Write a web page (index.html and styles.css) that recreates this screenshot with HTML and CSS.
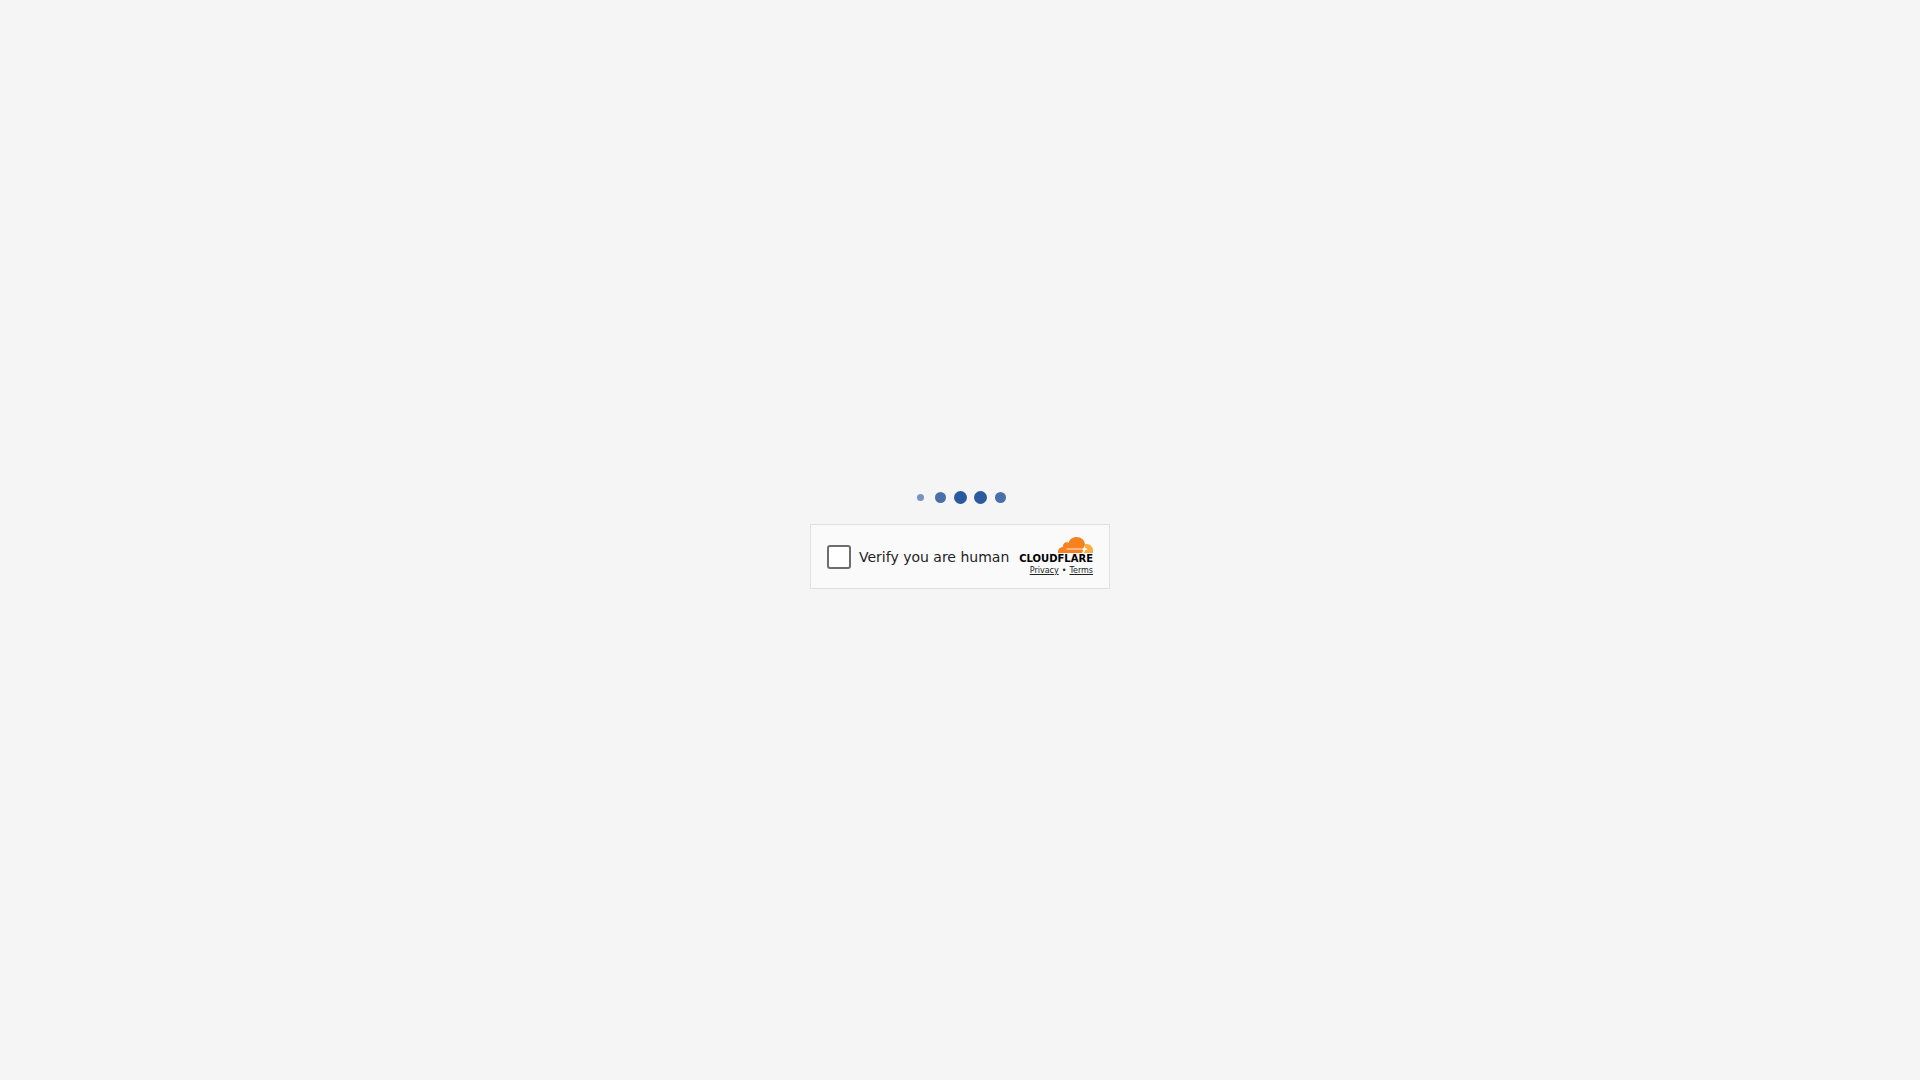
FILE: index.html
```
<!DOCTYPE html>
<html lang="en">
<head>
    <meta charset="UTF-8">
    <meta name="viewport" content="width=device-width, initial-scale=1.0">
    <title>Just a moment...</title>
    <link rel="stylesheet" href="styles.css">
</head>
<body>

    <div class="loader" role="status" aria-label="Loading">
        <span class="dot dot-small"></span>
        <span class="dot dot-medium"></span>
        <span class="dot"></span>
        <span class="dot"></span>
        <span class="dot dot-medium"></span>
    </div>

    <main class="widget">
        <div class="verify">
            <input type="checkbox" id="verifyHuman">
            <label for="verifyHuman">Verify you are human</label>
        </div>

        <div class="branding">
            <svg class="logo" viewBox="0 0 74 28" role="img" aria-label="Cloudflare">
                <path fill="#f6821f" d="M39 17c-.2-3 .9-5.700 5-6-.4-3.500 2.600-6 5.700-4.300C50.500 3.200 53.700 1 57.500 1c4.600 0 8 3 8.500 7.300l-2.300 8.700z"/>
                <path fill="#fbad41" d="M63.500 17l2.500-8.700c4.500-1 8 2.200 8 6.200V17z"/>
                <path fill="#fff" fill-opacity=".6" d="M47.500 12.300h15v1.400h-15z"/>
                <path fill="#fff" d="M65.600 9.800l.9 2.500 2.300.9-2.300.9-2 2.900h-1.300l1-3-2.200-.9 2.500-.9z"/>
                <text class="logo-text" x="74" y="26" text-anchor="end">CLOUDFLARE</text>
            </svg>
            <div class="links">
                <a href="#privacy">Privacy</a>
                <span>•</span>
                <a href="#terms">Terms</a>
            </div>
        </div>
    </main>

</body>
</html>
```
FILE: styles.css
```
/* General Styles */
* {
    box-sizing: border-box;
}

body {
    min-height: 100vh;
    margin: 0;
    display: flex;
    flex-direction: column;
    align-items: center;
    justify-content: center;
    gap: 20px;
    background-color: #f5f5f5;
    color: #232323;
    font-family: "DejaVu Sans", Verdana, sans-serif;
}

/* Loader */
.loader {
    display: grid;
    grid-template-columns: repeat(5, 13px);
    gap: 7px;
    height: 13px;
    place-items: center;
}

.dot {
    width: 13px;
    height: 13px;
    border-radius: 50%;
    background-color: #2c5a9e;
}

.dot-medium {
    width: 11px;
    height: 11px;
    background-color: #4a70aa;
}

.dot-small {
    width: 7px;
    height: 7px;
    background-color: #7893c1;
}

/* Widget */
.widget {
    width: 100%;
    max-width: 300px;
    min-height: 65px;
    padding: 0 16px;
    display: flex;
    align-items: center;
    justify-content: space-between;
    background-color: #fafafa;
    border: 1px solid #e0e0e0;
}

.verify {
    display: flex;
    align-items: center;
    gap: 8px;
    font-size: 14px;
    line-height: 20px;
    white-space: nowrap;
}

.verify input {
    appearance: none;
    width: 24px;
    height: 24px;
    margin: 0;
    flex: none;
    background-color: #fff;
    border: 2px solid #6d6d6d;
    border-radius: 3px;
    cursor: pointer;
}

.verify input:checked {
    background-color: #6d6d6d;
}

/* Branding */
.branding {
    display: flex;
    flex-direction: column;
    align-items: flex-end;
}

.logo {
    display: block;
    width: 74px;
    height: 28px;
    overflow: visible;
}

.logo-text {
    fill: #000;
    font-size: 10px;
    font-weight: 700;
}

.links {
    display: flex;
    gap: 3px;
    font-size: 8px;
    line-height: 14px;
}

.links a {
    color: inherit;
    text-decoration: underline;
}
```
